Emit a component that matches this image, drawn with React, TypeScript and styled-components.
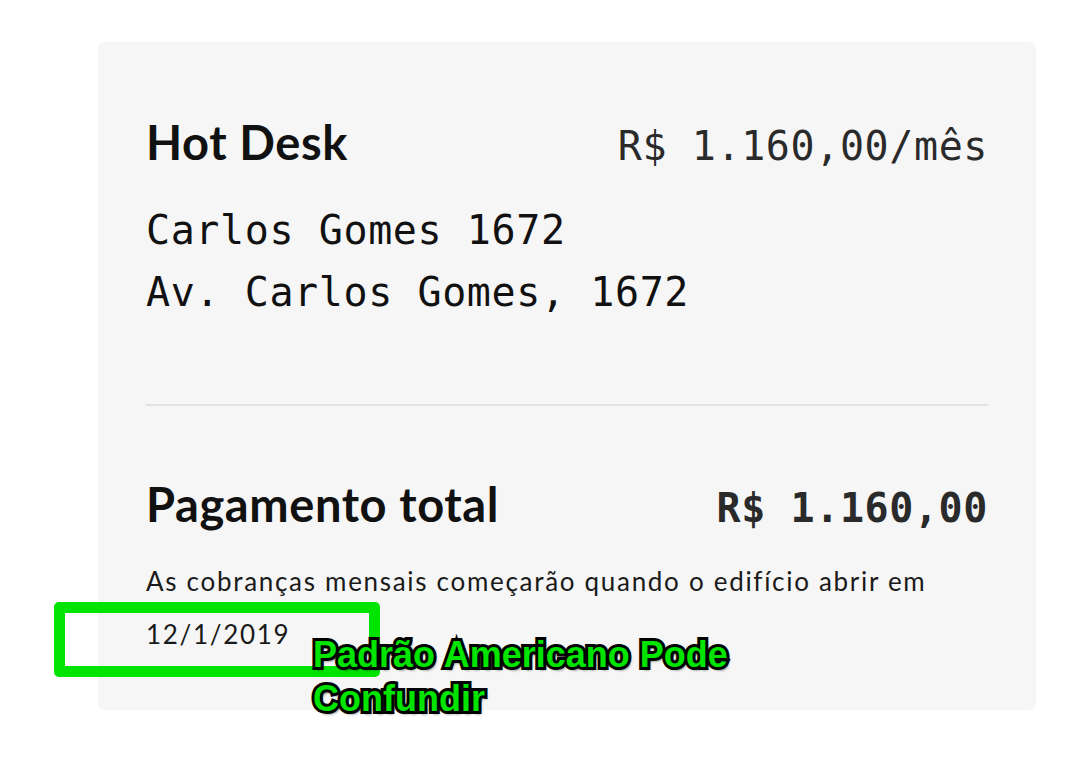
import React from "react";
import styled, { createGlobalStyle } from "styled-components";

const Global = createGlobalStyle`
  html, body { margin: 0; padding: 0; background: #ffffff; }
  body { width: 1082px; height: 758px; overflow: hidden; }
`;

const Page = styled.div`
  position: relative;
  width: 1082px;
  height: 758px;
  padding: 42px 46px 0 98px;
  box-sizing: border-box;
`;

const Card = styled.section`
  width: 938px;
  height: 668px;
  box-sizing: border-box;
  background: #f6f6f6;
  border-radius: 6px;
  padding: 74px 48px 0 48px;
  display: flex;
  flex-direction: column;
`;

const Row = styled.div<{ $gap?: number }>`
  display: flex;
  justify-content: space-between;
  align-items: baseline;
  margin-top: ${(p) => p.$gap ?? 0}px;
`;

const Title = styled.h2`
  margin: 0;
  font-family: "Lato", "Liberation Sans", sans-serif;
  font-weight: 700;
  font-size: 47px;
  line-height: 52px;
  letter-spacing: 0.6px;
  color: #111111;
`;

const Price = styled.span<{ $bold?: boolean }>`
  font-family: "DejaVu Sans Mono", "Liberation Mono", monospace;
  font-size: 40px;
  line-height: 52px;
  letter-spacing: 0.6px;
  font-weight: ${(p) => (p.$bold ? 700 : 400)};
  color: #2a2a2a;
`;

const Address = styled.div`
  margin-top: 27px;
  font-family: "DejaVu Sans Mono", "Liberation Mono", monospace;
  font-size: 40px;
  letter-spacing: 0.6px;
  line-height: 62px;
  color: #111111;
`;

const Divider = styled.hr`
  margin: 81px 0 0 0;
  border: none;
  height: 2px;
  background: #e2e2e2;
`;

const Note = styled.p`
  margin: 21px 0 0 0;
  font-family: "Lato", "Liberation Sans", sans-serif;
  font-size: 26px;
  line-height: 53px;
  color: #1a1a1a;
  letter-spacing: 1.7px;
`;

const Highlight = styled.div`
  position: absolute;
  left: 54px;
  top: 602px;
  width: 326px;
  height: 75px;
  box-sizing: border-box;
  border: 11px solid #00e400;
  border-radius: 5px;
`;

const Annotation = styled.div`
  position: absolute;
  left: 313px;
  top: 633px;
  font-family: "Liberation Sans", Arial, sans-serif;
  font-weight: 700;
  font-size: 36px;
  line-height: 44px;
  color: #00e400;
  -webkit-text-stroke: 6px #000;
  paint-order: stroke fill;
  text-shadow: 2px 3px 3px rgba(0, 0, 0, 0.6);
  letter-spacing: 0px;
`;

export default function App() {
  return (
    <>
      <Global />
      <Page>
        <Card>
          <Row>
            <Title>Hot Desk</Title>
            <Price>R$ 1.160,00/mês</Price>
          </Row>
          <Address>
            Carlos Gomes 1672
            <br />
            Av. Carlos Gomes, 1672
          </Address>
          <Divider />
          <Row $gap={72}>
            <Title>Pagamento total</Title>
            <Price $bold>R$ 1.160,00</Price>
          </Row>
          <Note>
            As cobranças mensais começarão quando o edifício abrir em
            <br />
            12/1/2019
          </Note>
        </Card>
        <Highlight />
        <Annotation>
          Padrão Americano Pode
          <br />
          Confundir
        </Annotation>
      </Page>
    </>
  );
}
